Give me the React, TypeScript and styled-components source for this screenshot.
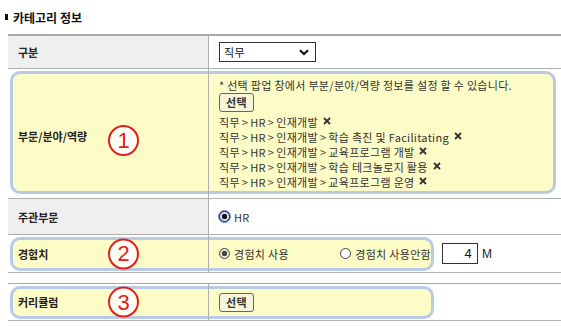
import React from "react";
import styled, { createGlobalStyle } from "styled-components";

const GlobalStyle = createGlobalStyle`
  html, body { margin: 0; padding: 0; background: #ffffff; }
  body {
    font-family: "Noto Sans CJK KR", "Noto Sans", sans-serif;
    font-size: 11px;
    color: #222222;
  }
`;

const Page = styled.div`
  width: 561px;
  height: 327px;
  overflow: hidden;
  padding-top: 9px;
  box-sizing: border-box;
`;

const Title = styled.h2`
  margin: 0 0 9px 5px;
  height: 16px;
  display: flex;
  align-items: center;
  gap: 5px;
  font-size: 12px;
  font-weight: 700;
  color: #111;
  &::before {
    content: "";
    width: 3px;
    height: 6px;
    background: #111;
  }
`;

const Table = styled.div<{ $top?: number }>`
  margin-left: 8px;
  margin-top: ${(p) => p.$top ?? 0}px;
  border-top: ${(p) => (p.$top ? "1px" : "2px")} solid #a8a8a8;
`;

const Row = styled.div<{ $h?: number }>`
  position: relative;
  display: grid;
  grid-template-columns: 200px 1fr;
  border-bottom: 1px solid #b0b0b0;
  min-height: ${(p) => p.$h ?? 0}px;
`;

const Label = styled.div<{ $hl?: boolean; $shift?: number }>`
  position: relative;
  z-index: 1;
  display: flex;
  align-items: center;
  padding-left: 10px;
  padding-top: ${(p) => p.$shift ?? 0}px;
  font-weight: 700;
  font-size: 11px;
  color: #222;
  background: ${(p) => (p.$hl ? "transparent" : "#efefef")};
`;

const Value = styled.div<{ $pad?: string }>`
  position: relative;
  z-index: 1;
  border-left: 1px solid #b0b0b0;
  padding: ${(p) => p.$pad ?? "0 10px"};
  display: flex;
  flex-direction: column;
  justify-content: center;
  letter-spacing: 0.3px;
`;

const Highlight = styled.div<{ $t: number; $b: number; $w: number }>`
  position: absolute;
  z-index: 0;
  left: 2px;
  top: ${(p) => p.$t}px;
  bottom: ${(p) => p.$b}px;
  width: ${(p) => p.$w}px;
  box-sizing: border-box;
  background: #fdfbc6;
  border: 3px solid #b8cbe6;
  border-radius: 10px;
`;

const Marker = styled.div<{ $top?: number }>`
  position: absolute;
  z-index: 2;
  left: 100px;
  top: ${(p) => (p.$top != null ? `${p.$top}px` : "50%")};
  transform: ${(p) => (p.$top != null ? "none" : "translateY(-50%)")};
  width: 31px;
  height: 31px;
  box-sizing: border-box;
  border: 2px solid #e0201c;
  border-radius: 50%;
  display: flex;
  align-items: center;
  justify-content: center;
  color: #e0201c;
  font-family: "Liberation Sans", Arial, sans-serif;
  font-size: 22px;
  line-height: 1;
  background: #fffef4;
`;

const Select = styled.div`
  width: 97px;
  height: 20px;
  box-sizing: border-box;
  border: 1px solid #333;
  background: #fff;
  display: flex;
  align-items: center;
  justify-content: space-between;
  padding: 0 6px 0 4px;
  font-size: 11px;
  color: #111;
`;

const Line = styled.div`
  line-height: 15px;
  height: 15px;
  display: flex;
  align-items: center;
  white-space: nowrap;
  color: #333;
`;

const Button = styled.button`
  align-self: flex-start;
  height: 19px;
  padding: 0 6px;
  border: 1px solid #666;
  border-radius: 3px;
  background: #f7f5dc;
  font-family: inherit;
  font-size: 11px;
  font-weight: 700;
  color: #333;
  line-height: 17px;
  margin: 0;
  letter-spacing: 0.3px;
`;

const List = styled.div`
  margin-top: 3px;
`;

const Sep = styled.span`
  margin: 0 2px;
  color: #444;
`;

const XMark = styled.svg`
  margin-left: 5px;
  margin-top: -3px;
  flex: none;
`;

const RadioDot = styled.span<{ $on?: boolean; $focus?: boolean }>`
  width: 11px;
  height: 11px;
  box-sizing: border-box;
  border-radius: 50%;
  border: 1px solid ${(p) => (p.$focus ? "#111" : "#444")};
  background: ${(p) =>
    p.$on
      ? p.$focus
        ? "radial-gradient(circle, #111 0 2.5px, #dfe8f7 3px)"
        : "radial-gradient(circle, #444 0 2.5px, #e9e6c8 3px)"
      : "#fff"};
  box-shadow: ${(p) => (p.$focus ? "0 0 0 1px #5b7fc4" : "none")};
  flex: none;
`;

const RadioLabel = styled.label`
  display: inline-flex;
  align-items: center;
  gap: 4px;
  font-size: 11px;
  color: #333;
`;

const RadioRow = styled.div`
  display: flex;
  align-items: center;
`;

const RadioGroup = styled.div`
  width: 212px;
  display: flex;
  justify-content: space-between;
  align-items: center;
`;

const NumInput = styled.div`
  margin-left: 11px;
  width: 36px;
  height: 21px;
  box-sizing: border-box;
  border: 1px solid #333;
  background: #fff;
  text-align: right;
  padding-right: 5px;
  font-family: "Liberation Sans", Arial, sans-serif;
  font-size: 13px;
  line-height: 19px;
  color: #111;
`;

const Unit = styled.span`
  margin-left: 4px;
  font-family: "Liberation Sans", Arial, sans-serif;
  font-size: 12px;
  color: #222;
`;

const Chevron = () => (
  <svg width="10" height="7" viewBox="0 0 10 7">
    <path d="M1 1.2 L5 5 L9 1.2" fill="none" stroke="#111" strokeWidth="2.2" />
  </svg>
);

const Close = () => (
  <XMark width="8" height="8" viewBox="0 0 8 8">
    <path d="M1 1 L7 7 M7 1 L1 7" stroke="#333" strokeWidth="1.8" />
  </XMark>
);

const items = [
  ["인재개발"],
  ["인재개발", "학습 촉진 및 Facilitating"],
  ["인재개발", "교육프로그램 개발"],
  ["인재개발", "학습 테크놀로지 활용"],
  ["인재개발", "교육프로그램 운영"],
];

export default function App() {
  return (
    <Page>
      <GlobalStyle />
      <Title>카테고리 정보</Title>
      <Table>
        <Row $h={32}>
          <Label>구분</Label>
          <Value>
            <Select>
              <span>직무</span>
              <Chevron />
            </Select>
          </Value>
        </Row>
        <Row>
          <Highlight $t={2} $b={4} $w={546} />
          <Label $hl $shift={5}>부문/분야/역량</Label>
          <Marker $top={56}>1</Marker>
          <Value $pad="9px 10px 8px">
            <Line>* 선택 팝업 창에서 부분/분야/역량 정보를 설정 할 수 있습니다.</Line>
            <Button>선택</Button>
            <List>
              {items.map((parts, i) => (
                <Line key={i}>
                  직무<Sep>&gt;</Sep>HR
                  {parts.map((p, j) => (
                    <React.Fragment key={j}>
                      <Sep>&gt;</Sep>
                      {p}
                    </React.Fragment>
                  ))}
                  <Close />
                </Line>
              ))}
            </List>
          </Value>
        </Row>
        <Row $h={35}>
          <Label>주관부문</Label>
          <Value>
            <RadioRow>
              <RadioLabel>
                <RadioDot $on $focus />
                HR
              </RadioLabel>
            </RadioRow>
          </Value>
        </Row>
        <Row $h={37}>
          <Highlight $t={2} $b={1} $w={424} />
          <Label $hl>경험치</Label>
          <Marker>2</Marker>
          <Value>
            <RadioRow>
              <RadioGroup>
                <RadioLabel>
                  <RadioDot $on />
                  경험치 사용
                </RadioLabel>
                <RadioLabel>
                  <RadioDot />
                  경험치 사용안함
                </RadioLabel>
              </RadioGroup>
              <NumInput>4</NumInput>
              <Unit>M</Unit>
            </RadioRow>
          </Value>
        </Row>
      </Table>
      <Table $top={10}>
        <Row $h={36}>
          <Highlight $t={2} $b={1} $w={424} />
          <Label $hl>커리큘럼</Label>
          <Marker>3</Marker>
          <Value>
            <Button>선택</Button>
          </Value>
        </Row>
      </Table>
    </Page>
  );
}
